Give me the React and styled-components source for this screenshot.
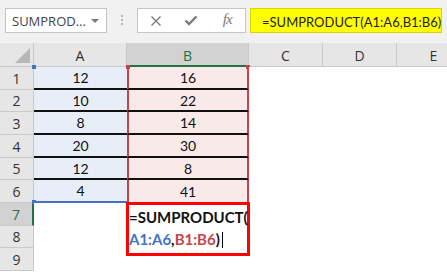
import styled, { createGlobalStyle } from "styled-components";

const GlobalStyle = createGlobalStyle`
  html, body {
    margin: 0;
    padding: 0;
    background: #fff;
  }
  body {
    width: 447px;
    height: 272px;
    overflow: hidden;
  }
`;

const Window = styled.div`
  width: 447px;
  height: 272px;
  display: flex;
  flex-direction: column;
  overflow: hidden;
  font-family: "Open Sans", "Liberation Sans", sans-serif;
`;

const FormulaBar = styled.div`
  flex: none;
  height: 43px;
  box-sizing: border-box;
  padding: 8px 0 0 5px;
  background: #f1f1f1;
  display: flex;
  align-items: flex-start;
`;

const NameBox = styled.div`
  box-sizing: border-box;
  width: 102px;
  height: 25px;
  background: #fff;
  border: 1px solid #c6c6c6;
  display: flex;
  align-items: center;
  justify-content: space-between;
  padding: 0 7px 0 6px;
  font-size: 13px;
  color: #444;
`;

const DropArrow = styled.span`
  width: 0;
  height: 0;
  border-left: 4px solid transparent;
  border-right: 4px solid transparent;
  border-top: 4px solid #7a7a7a;
`;

const Grip = styled.div`
  width: 30px;
  height: 25px;
  display: flex;
  flex-direction: column;
  align-items: center;
  gap: 2px;
  padding-top: 7px;
  box-sizing: border-box;
`;

const GripDot = styled.span`
  width: 2px;
  height: 2px;
  background: #b4b4b4;
`;

const ButtonBox = styled.div`
  box-sizing: border-box;
  width: 109px;
  height: 25px;
  background: #fff;
  border: 1px solid #c6c6c6;
  display: grid;
  grid-template-columns: repeat(3, 1fr);
  align-items: center;
  justify-items: center;
  color: #7a7a7a;
`;

const FxLabel = styled.span`
  font-family: "Liberation Serif", serif;
  font-style: italic;
  font-size: 15px;
  color: #7a7a7a;
  letter-spacing: -1px;
  margin-top: -2px;
`;

const FormulaInput = styled.div`
  box-sizing: border-box;
  margin-left: 4px;
  width: 192px;
  height: 25px;
  background: #ffff00;
  border: 1px solid #d8d800;
  display: flex;
  align-items: center;
  padding: 2px 0 0 11px;
  font-family: Lato, "Liberation Sans", sans-serif;
  font-size: 13px;
  color: #222;
  white-space: nowrap;
`;

const Sheet = styled.div`
  flex: none;
  display: grid;
  grid-template-columns: 34px 93px 122px 74px 74px 74px;
  grid-template-rows: 24px 23px 22px 23px 23px 22px 23px 23px 22px 23px;
  width: 471px;
`;

const Corner = styled.div`
  box-sizing: border-box;
  background: #e6e6e6;
  border-right: 1px solid #c9c9c9;
  border-bottom: 1px solid #c9c9c9;
  display: flex;
  justify-content: flex-end;
  align-items: flex-end;
  padding: 0 3px 3px 0;
`;

const CornerMark = styled.span`
  width: 0;
  height: 0;
  border-left: 15px solid transparent;
  border-bottom: 15px solid #b7b7b7;
`;

const ColHeader = styled.div`
  box-sizing: border-box;
  background: ${(p) => (p.$selected ? "#d2d2d2" : "#e6e6e6")};
  border-right: 1px solid #c9c9c9;
  border-bottom: ${(p) => (p.$selected ? "2px solid #217346" : "1px solid #c9c9c9")};
  display: flex;
  align-items: center;
  justify-content: center;
  padding-top: ${(p) => (p.$selected ? "2px" : "1px")};
  font-size: 14px;
  color: ${(p) => (p.$selected ? "#217346" : "#333")};
`;

const RowHeader = styled.div`
  box-sizing: border-box;
  background: ${(p) => (p.$selected ? "#d2d2d2" : "#e6e6e6")};
  border-right: ${(p) => (p.$selected ? "2px solid #217346" : "1px solid #c9c9c9")};
  border-bottom: 1px solid #c9c9c9;
  display: flex;
  align-items: center;
  justify-content: center;
  font-size: 14px;
  color: ${(p) => (p.$selected ? "#217346" : "#333")};
`;

const Cell = styled.div`
  position: relative;
  box-sizing: border-box;
  background: ${(p) => p.$fill || "#fff"};
  border-bottom: ${(p) => p.$under || "none"};
  border-left: ${(p) => (p.$ranged ? "2px solid #c8424a" : "none")};
  border-right: ${(p) => (p.$ranged ? "2px solid #c8424a" : "none")};
  display: flex;
  align-items: center;
  justify-content: center;
  font-family: Lato, "Liberation Sans", sans-serif;
  font-size: 14px;
  color: #111;
`;

const Handle = styled.span`
  position: absolute;
  width: 4px;
  height: 4px;
  background: ${(p) => p.$color};
  ${(p) => p.$pos}
`;

const Editor = styled.div`
  grid-column: 3;
  grid-row: 8 / span 2;
  position: relative;
  z-index: 2;
  align-self: start;
  box-sizing: border-box;
  width: 124px;
  height: 54px;
  margin: -1px 0 0 -1px;
  border: 3px solid #ff0000;
  background: #fff;
  padding: 1px 0 0 0;
  font-family: Lato, "Liberation Sans", sans-serif;
  font-weight: 700;
  font-size: 15px;
  line-height: 22px;
  color: #111;
`;

const Ref = styled.span`
  color: ${(p) => p.$color};
`;

const Caret = styled.span`
  display: inline-block;
  width: 1px;
  height: 16px;
  background: #000;
  margin-left: 2px;
  vertical-align: -3px;
`;

const RED = "#c8424a";
const BLUE = "#4472c4";
const colsA = [12, 10, 8, 20, 12, 4];
const colsB = [16, 22, 14, 30, 8, 41];

const CrossIcon = () => (
  <svg width="12" height="12" viewBox="0 0 12 12">
    <path d="M1.5 1.5 L10.5 10.5 M10.5 1.5 L1.5 10.5" stroke="#7a7a7a" strokeWidth="1.4" fill="none" />
  </svg>
);

const CheckIcon = () => (
  <svg width="14" height="11" viewBox="0 0 14 11">
    <path d="M1.5 5.5 L5 9 L12.5 1.5" stroke="#7a7a7a" strokeWidth="2.4" fill="none" />
  </svg>
);

const App = () => {
  const rows = [];
  for (let r = 1; r <= 9; r++) {
    const inRange = r <= 6;
    const under = r <= 5 ? "2px solid #111" : r === 6 ? `2px solid ${BLUE}` : null;
    rows.push(
      <RowHeader key={`h${r}`} $selected={r === 7}>
        {r}
      </RowHeader>
    );
    rows.push(
      <Cell key={`a${r}`} $fill={inRange ? "#e8eef8" : null} $under={under}>
        {inRange ? colsA[r - 1] : ""}
        {r === 1 && <Handle $color={BLUE} $pos="left: -2px; top: -2px;" />}
        {r === 6 && <Handle $color={BLUE} $pos="left: -2px; bottom: -3px;" />}
      </Cell>
    );
    // B7 and B8 sit under the editor box
    if (r <= 6) {
      rows.push(
        <Cell key={`b${r}`} $fill="#f9e9e9" $ranged $under={r <= 5 ? "2px solid #111" : null}>
          {colsB[r - 1]}
          {r === 1 && <Handle $color={RED} $pos="left: -3px; top: -2px;" />}
          {r === 1 && <Handle $color={RED} $pos="right: -3px; top: -2px;" />}
        </Cell>
      );
    } else if (r === 9) {
      rows.push(<Cell key={`b${r}`} />);
    }
    rows.push(<Cell key={`c${r}`} />);
    rows.push(<Cell key={`d${r}`} />);
    rows.push(<Cell key={`e${r}`} />);
  }

  return (
    <Window>
      <GlobalStyle />
      <FormulaBar>
        <NameBox>
          <span>SUMPROD...</span>
          <DropArrow />
        </NameBox>
        <Grip>
          <GripDot />
          <GripDot />
          <GripDot />
        </Grip>
        <ButtonBox>
          <CrossIcon />
          <CheckIcon />
          <FxLabel>fx</FxLabel>
        </ButtonBox>
        <FormulaInput>=SUMPRODUCT(A1:A6,B1:B6)</FormulaInput>
      </FormulaBar>
      <Sheet>
        <Corner>
          <CornerMark />
        </Corner>
        <ColHeader>A</ColHeader>
        <ColHeader $selected>B</ColHeader>
        <ColHeader>C</ColHeader>
        <ColHeader>D</ColHeader>
        <ColHeader>E</ColHeader>
        {rows}
        <Editor>
          =SUMPRODUCT(
          <br />
          <Ref $color={BLUE}>A1:A6</Ref>,<Ref $color={RED}>B1:B6</Ref>)
          <Caret />
        </Editor>
      </Sheet>
    </Window>
  );
};

export default App;
